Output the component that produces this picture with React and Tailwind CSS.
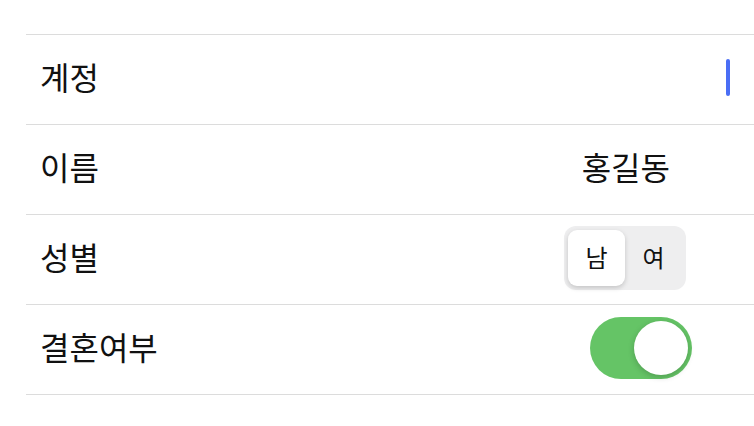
import { useState } from 'react';

const font = { fontFamily: '"Noto Sans CJK KR", "Noto Sans", sans-serif' };

function Row({ label, children }) {
  return (
    <div className="flex h-[90px] items-center justify-between border-t border-[#dcdcdc] pl-[14px]">
      <span className="pb-[7px] text-[32px] leading-none text-[#111]">{label}</span>
      {children}
    </div>
  );
}

function Segmented({ value, onChange }) {
  const items = ['남', '여'];
  return (
    <div className="mr-[68px] mb-[3px] flex h-[64px] w-[122px] rounded-[12px] bg-[#eeeeef] p-[4px]">
      {items.map((item) => (
        <button
          key={item}
          onClick={() => onChange(item)}
          className={`flex-1 rounded-[9px] pb-[2px] text-[24px] leading-none text-[#111] ${
            value === item ? 'bg-white shadow-[0_2px_5px_rgba(0,0,0,0.18)]' : ''
          }`}
        >
          {item}
        </button>
      ))}
    </div>
  );
}

function Toggle({ on, onChange }) {
  return (
    <button
      onClick={() => onChange(!on)}
      className={`mr-[62px] mb-[3px] flex h-[62px] w-[102px] items-center rounded-full p-[4px] ${
        on ? 'justify-end bg-[#65c466]' : 'justify-start bg-[#e9e9ea]'
      }`}
    >
      <span className="h-[54px] w-[54px] rounded-full bg-white shadow-[0_2px_6px_rgba(0,0,0,0.2)]" />
    </button>
  );
}

export default function App() {
  const [gender, setGender] = useState('남');
  const [married, setMarried] = useState(true);

  return (
    <div className="min-h-screen bg-white pt-[34px]" style={font}>
      <div className="ml-[26px] border-b border-[#dcdcdc]">
        <Row label="계정">
          <div className="mr-[24px] mb-[4px] h-[37px] w-[4px] rounded-full bg-[#4a6ef5]" />
        </Row>
        <Row label="이름">
          <span className="mr-[84px] pb-[7px] text-[32px] leading-none text-[#111]">홍길동</span>
        </Row>
        <Row label="성별">
          <Segmented value={gender} onChange={setGender} />
        </Row>
        <Row label="결혼여부">
          <Toggle on={married} onChange={setMarried} />
        </Row>
      </div>
    </div>
  );
}
